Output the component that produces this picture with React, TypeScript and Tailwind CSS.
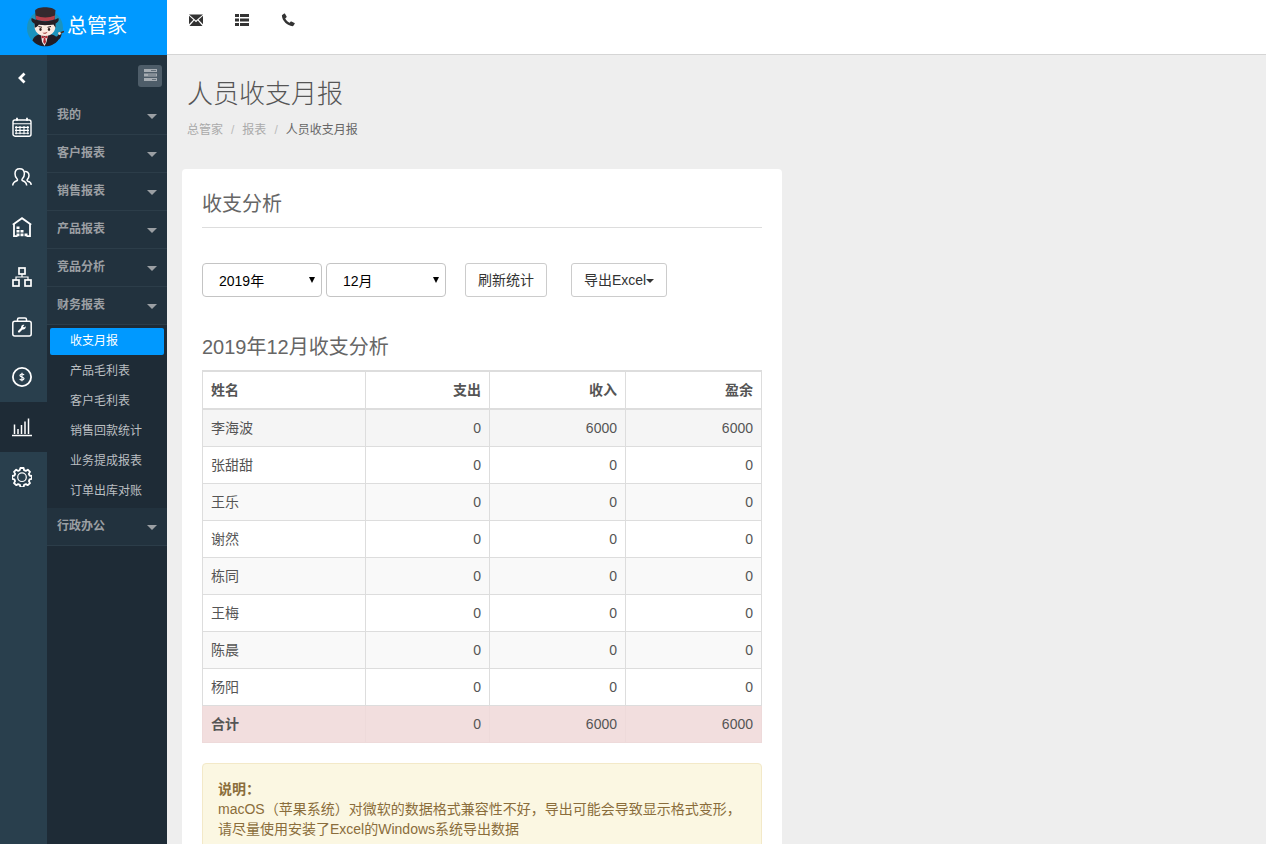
import { useState } from "react";
import type { ReactNode } from "react";

const railIcons: { label: string; icon: ReactNode }[] = [
    {
        label: "日历",
        icon: (
            <g strokeWidth="1.4">
                <rect x="1" y="3" width="18" height="16.2" rx="2" />
                <path d="M1 6.7h18M4.2 9v8.2M8 9v8.2M12 9v8.2M15.8 9v8.2M3 10.4h14M3 13.4h14M3 16.3h14" strokeWidth="1.1" />
                <path d="M5 .8v3M15 .8v3" strokeWidth="1.8" />
            </g>
        ),
    },
    {
        label: "客户",
        icon: (
            <g strokeWidth="1.5">
                <path d="M.7 18.500c.3-3 2-4 4.100-4.700.9-.3.8-1.400.2-2C3.600 10.400 3 8.800 3 6.700c0-3 1.900-5 4.700-5s4.700 2 4.700 5c0 2.100-.7 3.700-2 5.100-.6.700-.7 1.700.3 2 2.200.7 3.700 1.700 4 4.700" />
                <path d="M12.500 4.700c2.600-.5 4.500 1.100 4.500 3.900 0 1.600-.6 2.800-1.600 3.800-.6.600-.5 1.500.4 1.800 1.900.5 3.200 1.300 3.500 3.600" />
            </g>
        ),
    },
    {
        label: "仓库",
        icon: (
            <g>
                <path d="M.8 7.800 10 1.200l9.200 6.600M2 7.500v11.700h3.500M18 7.500v11.700h-3.500" strokeWidth="1.800" />
                <path d="M4.500 9.500h3v2.600h-3zM4.500 13h3v2.600h-3zM8.500 13h3v2.600h-3zM4.500 16.500h3v2.800h-3zM8.500 16.500h3v2.800h-3zM12.500 16.500h3v2.800h-3z" fill="currentColor" stroke="none" />
            </g>
        ),
    },
    {
        label: "组织",
        icon: (
            <g strokeWidth="1.7">
                <rect x="7" y="1" width="6" height="6" />
                <rect x="1" y="13" width="6" height="6" />
                <rect x="13" y="13" width="6" height="6" />
                <path d="M10 7v3M4 13v-3h12v3" strokeWidth="1.200" />
            </g>
        ),
    },
    {
        label: "工具",
        icon: (
            <g strokeWidth="1.5">
                <rect x=".8" y="4.200" width="18.400" height="14.800" rx="2" />
                <path d="M5.500 4V2.500C5.500 1.500 6.100 1 7 1h6c.9 0 1.500.5 1.500 1.500V4" />
                <path d="M7 14.500 10.500 11" strokeWidth="2.200" strokeLinecap="round" />
                <path d="M12.400 7.900 11 9.700l1 .9 1.700-1.400c.3 1.500-.4 2.900-1.900 3.200-2.100.4-3.300-1.300-2.500-3.100.5-1.100 1.600-1.700 3.100-1.400z" fill="currentColor" stroke="none" />
            </g>
        ),
    },
    {
        label: "财务",
        icon: (
            <g>
                <circle cx="10" cy="10" r="9.100" strokeWidth="1.800" />
                <path d="M12 8.100C11.800 7.300 11 7 10 7c-1.200 0-2 .6-2 1.500C8 10.400 12 9.500 12 11.600c0 .9-.8 1.500-2 1.500s-2-.4-2.200-1.300M10 5.800v8.500" strokeWidth="1.200" />
            </g>
        ),
    },
    {
        label: "报表",
        icon: (
            <path d="M0 18.500h20M2.500 17V7.500M6 17v-5M9.500 17V8M13 17V4.500M16.500 17V1.500" strokeWidth="1.500" />
        ),
    },
    {
        label: "设置",
        icon: (
            <g strokeWidth="1.800">
                <path d="M8.400 1h3.200l.5 2.200 1.700.7 2-1.200 2.200 2.200-1.200 2 .7 1.600 2.300.5v2.800l-2.200.6-.7 1.700 1.100 2-2.200 2.100-1.900-1.100-1.800.7-.5 2.300H8.400l-.5-2.300-1.800-.7-1.900 1.100-2.200-2.100 1.100-2-.7-1.700-2.200-.6V9l2.300-.5.700-1.600-1.200-2 2.200-2.200 2 1.200 1.500-.7z" strokeLinejoin="round" />
                <circle cx="10" cy="10.200" r="4.300" strokeWidth="1.200" />
            </g>
        ),
    },
];

const reportItems = ["收支月报", "产品毛利表", "客户毛利表", "销售回款统计", "业务提成报表", "订单出库对账"];

const menuGroups: { title: string; items?: string[] }[] = [
    { title: "我的" },
    { title: "客户报表" },
    { title: "销售报表" },
    { title: "产品报表" },
    { title: "竞品分析" },
    { title: "财务报表", items: reportItems },
    { title: "行政办公" },
];

const rows = [
    { name: "李海波", out: 0, income: 6000, left: 6000 },
    { name: "张甜甜", out: 0, income: 0, left: 0 },
    { name: "王乐", out: 0, income: 0, left: 0 },
    { name: "谢然", out: 0, income: 0, left: 0 },
    { name: "栋同", out: 0, income: 0, left: 0 },
    { name: "王梅", out: 0, income: 0, left: 0 },
    { name: "陈晨", out: 0, income: 0, left: 0 },
    { name: "杨阳", out: 0, income: 0, left: 0 },
];

const Logo = () => (
    <svg viewBox="0 0 38 42" className="h-[42px] w-[38px] shrink-0" aria-hidden="true">
        <circle cx="19" cy="23" r="18" fill="#1c93bd" />
        <path d="M6.500 35.500C8 31 11 30 15 29h9c4 1 7 2 8 6.500-3 3.500-7.500 5.800-12.800 5.800-5.200 0-9.700-2.200-12.700-5.800z" fill="#211d26" />
        <path d="M28 32c3 0 4-1 5-4l2.500 1c-.3 4-3 7-6.500 7z" fill="#211d26" />
        <path d="M15 30l3.500 2 3.500-2-1.500 7-2 4-2.500-4z" fill="#efe6e6" />
        <path d="M15.500 30.500l3 1.200 3-1.200v3l-3-1-3 1zM17.800 33h1.500l.7 4-1.400 2-1.400-2z" fill="#b52a33" />
        <path d="M33 28.500l5-2" stroke="#462b20" strokeWidth="1.500" />
        <circle cx="33.500" cy="28.500" r="1.400" fill="#f6d9c8" />
        <path d="M9 18c6 2 14 2 20 0 .8 3 .6 6-1 8.500-2 3-5.500 4.500-9 4.500s-7-1.500-9-4.500C8.400 24 8.200 21 9 18z" fill="#fbeae0" />
        <path d="M8.500 17h21l.2 6-2.200-3.500c-6 .8-11 .5-14.500-.3-1 1.800-2.300 3-4.300 3.600z" fill="#1b1a20" />
        <path d="M9 5.500C11 1 27 1 29.500 5.500L28.500 15H10z" fill="#35292e" />
        <path d="M9.600 10.500c6 2.600 13.500 2.600 19.400 0l-.5 4c-6 2-12.500 2-18.500 0z" fill="#b8404a" />
        <path d="M5.800 13c8 4.200 18.500 4.200 26.500 0 1.300 2.500-.5 5-4.300 6-6 1.500-12 1.500-18 0-3.800-1-5.500-3.500-4.200-6z" fill="#251f25" />
        <path d="M12.500 21.500l3.500.8M21.500 22.300l3.500-.8" stroke="#352322" strokeWidth="1" />
        <ellipse cx="14.500" cy="24.500" rx="1.200" ry="1.400" fill="#33211e" />
        <ellipse cx="23" cy="24.500" rx="1.200" ry="1.400" fill="#33211e" />
        <path d="M16.500 27.500c1.600.5 3.400.3 5-.8-.6 2.200-3.800 3-5 .8z" fill="#a33b3a" />
    </svg>
);

const Caret = ({ className }: { className?: string }) => (
    <svg viewBox="0 0 10 5" className={className} fill="currentColor" aria-hidden="true">
        <path d="M0 0h10L5 5z" />
    </svg>
);

const PeriodSelect = ({ label, options }: { label: string; options: string[] }) => (
    <div className="relative">
        <select
            aria-label={label}
            className="block h-[34px] w-[120px] appearance-none rounded-[4px] border border-[#c4c4c4] bg-white pt-[2px] pl-4 text-sm text-black"
        >
            {options.map((o) => (
                <option key={o}>{o}</option>
            ))}
        </select>
        <svg viewBox="0 0 6 6" className="pointer-events-none absolute top-[14px] right-[7px] size-[6px]" aria-hidden="true">
            <path d="M0 0h6L3 6z" />
        </svg>
    </div>
);

const TopBar = () => (
    <header className="flex h-[55px] shrink-0">
        <a href="#" className="flex w-[167px] items-center bg-[#0099ff] pb-1 pl-[26px] text-white">
            <Logo />
            <span className="ml-[3px] text-[20px] leading-6">总管家</span>
        </a>
        <nav className="flex grow items-start gap-8 border-b border-[#d5d5d5] bg-white pt-[13px] pl-[22px] text-[#333]">
            <button type="button" aria-label="消息">
                <svg viewBox="0 0 14 14" className="size-[14px]" fill="currentColor">
                    <path d="M0 1.500h14L7 7.600zM0 2.800l4.400 4L0 11.200zM14 2.800l-4.400 4 4.400 4.400zM5.200 7.600 7 9.200l1.800-1.600 4.700 5.400H.5z" />
                </svg>
            </button>
            <button type="button" aria-label="列表">
                <svg viewBox="0 0 14 14" className="size-[14px]" fill="currentColor">
                    <path d="M0 1h4v3H0zM5 1h9v3H5zM0 5.500h4v3H0zM5 5.500h9v3H5zM0 10h4v3H0zM5 10h9v3H5z" />
                </svg>
            </button>
            <button type="button" aria-label="电话">
                <svg viewBox="0 0 14 14" className="size-[14px]" fill="currentColor">
                    <path d="M1.200 1.900 3.200.6c.3-.2.6-.1.800.2l1.600 2.700c.2.300.1.600-.1.800L4.200 5.400c.9 1.900 2.500 3.500 4.500 4.400l1-1.200c.2-.2.500-.3.800-.1l3 1.500c.3.200.4.500.2.800l-1.300 2c-.2.300-.5.400-.8.400C6.200 12.800 1.200 8 .9 2.600c0-.3.100-.5.300-.7z" />
                </svg>
            </button>
        </nav>
    </header>
);

const SideMenu = () => {
    const [active, setActive] = useState("收支月报");

    return (
        <aside className="flex w-[167px] shrink-0">
            <nav className="w-[47px] bg-[#293f4d] text-white">
                <button type="button" aria-label="收起" className="flex h-[47px] w-full items-center justify-center pr-1 pb-[2px]">
                    <svg viewBox="0 0 10 12" className="h-3 w-[10px]" fill="none" stroke="currentColor" strokeWidth="2.800">
                        <path d="M7.500 1.500 3 6l4.500 4.500" />
                    </svg>
                </button>
                {railIcons.map((r) => (
                    <a
                        key={r.label}
                        href="#"
                        aria-label={r.label}
                        className={
                            "flex h-[50px] items-center justify-center pr-[3px] " +
                            (r.label === "报表" ? "bg-[#1e2b36]" : "")
                        }
                    >
                        <svg viewBox="0 0 20 20" className="size-5" fill="none" stroke="currentColor">
                            {r.icon}
                        </svg>
                    </a>
                ))}
            </nav>

            <nav className="w-[120px] bg-[#1e2b36] text-xs">
                <div className="flex h-[42px] justify-end bg-[#22323e] pt-[10px] pr-[5px]">
                    <button type="button" aria-label="切换菜单" className="flex h-[22px] w-6 justify-center rounded-[3px] bg-[#4e5d69] pt-1 text-[#a7adb3]">
                        <svg viewBox="0 0 13 12" className="h-3 w-[13px]" fill="currentColor">
                            <path d="M0 0h13v3H0zM0 4.500h13v3H0zM0 9h13v3H0z" />
                            <path d="M7 1.500h5M4 6h8M8 10.500h4" stroke="#65717b" strokeWidth="1" />
                        </svg>
                    </button>
                </div>
                {menuGroups.map((g) => (
                    <div key={g.title}>
                        <button
                            type="button"
                            className="flex h-[38px] w-full items-center justify-between border-b border-[#2c3d49] bg-[#22323e] pr-[10px] pb-[1px] pl-[10px] font-bold text-[#9b9fa3]"
                        >
                            {g.title}
                            <Caret className="mt-[2px] h-[5px] w-[10px]" />
                        </button>
                        {g.items && (
                            <ul className="flex flex-col gap-[3px] p-[3px]">
                                {g.items.map((item) => (
                                    <li key={item}>
                                        <a
                                            href="#"
                                            onClick={() => setActive(item)}
                                            className={
                                                "block h-[27px] rounded-[2px] pl-5 leading-[27px] " +
                                                (item === active ? "bg-[#0099ff] text-white" : "text-[#bbbfc2]")
                                            }
                                        >
                                            {item}
                                        </a>
                                    </li>
                                ))}
                            </ul>
                        )}
                    </div>
                ))}
            </nav>
        </aside>
    );
};

const ReportTable = () => (
    <table className="w-full table-fixed border-collapse border border-[#ddd] text-sm leading-5 [&_td]:border [&_td]:border-[#ddd] [&_td]:p-2 [&_th]:border [&_th]:border-[#ddd] [&_th]:p-2">
        <colgroup>
            <col className="w-[163px]" />
            <col className="w-[124px]" />
            <col className="w-[136px]" />
            <col className="w-[136px]" />
        </colgroup>
        <thead className="border-y-2 border-[#ddd]">
            <tr>
                <th className="text-left">姓名</th>
                <th className="text-right">支出</th>
                <th className="text-right">收入</th>
                <th className="text-right">盈余</th>
            </tr>
        </thead>
        <tbody>
            {rows.map((row, idx) => (
                <tr key={row.name} className={idx === 0 ? "bg-[#f5f5f5]" : idx % 2 === 0 ? "bg-[#f9f9f9]" : "bg-white"}>
                    <td>{row.name}</td>
                    <td className="text-right">{row.out}</td>
                    <td className="text-right">{row.income}</td>
                    <td className="text-right">{row.left}</td>
                </tr>
            ))}
        </tbody>
        <tfoot>
            <tr className="bg-[#f2dede] [&>*]:border-[#eedada]!">
                <th className="text-left">合计</th>
                <td className="text-right">0</td>
                <td className="text-right">6000</td>
                <td className="text-right">6000</td>
            </tr>
        </tfoot>
    </table>
);

export default function App() {
    return (
        <div className="flex h-screen flex-col overflow-hidden bg-[#eee] font-['Liberation_Sans','Noto_Sans_CJK_SC',sans-serif] text-[#555]">
            <TopBar />
            <div className="flex min-h-0 grow">
                <SideMenu />
                <main className="grow overflow-y-auto px-[15px] [scrollbar-width:none]">
                    <div className="px-[5px] pt-[21px] pb-[29px]">
                        <h1 className="text-[26px] leading-9 font-light text-[#555]">人员收支月报</h1>
                        <nav aria-label="路径" className="mt-2 flex gap-2 text-xs leading-5 text-[#aaa]">
                            <a href="#">总管家</a>
                            <span className="text-[#bbb]">/</span>
                            <a href="#">报表</a>
                            <span className="text-[#bbb]">/</span>
                            <span className="text-[#666]">人员收支月报</span>
                        </nav>
                    </div>

                    <section className="max-w-[600px] rounded-[4px] bg-white p-5">
                        <h2 className="border-b border-[#ddd] pt-[2px] pb-[10px] text-[20px] leading-[26px] text-[#666]">收支分析</h2>

                        <div className="mt-[35px] flex">
                            <PeriodSelect label="年份" options={["2019年", "2018年"]} />
                            <div className="ml-1">
                                <PeriodSelect label="月份" options={["12月", "11月"]} />
                            </div>
                            <button type="button" className="ml-[19px] h-[34px] rounded-[3px] border border-[#ccc] bg-white px-3 text-sm text-[#333]">
                                刷新统计
                            </button>
                            <button type="button" className="ml-6 flex h-[34px] items-center rounded-[3px] border border-[#ccc] bg-white px-3 text-sm text-[#333]">
                                导出Excel
                                <Caret className="mt-[2px] h-1 w-2" />
                            </button>
                        </div>

                        <h3 className="mt-[37px] mb-[10px] text-[20px] leading-[26px] text-[#666]">2019年12月收支分析</h3>

                        <ReportTable />

                        <div className="mt-5 rounded-[4px] border border-[#f3e9c8] bg-[#fbf7e2] p-[15px] text-sm leading-5 text-[#8a6d3b]">
                            <strong>说明：</strong>
                            <p>macOS（苹果系统）对微软的数据格式兼容性不好，导出可能会导致显示格式变形，请尽量使用安装了Excel的Windows系统导出数据</p>
                        </div>
                    </section>
                </main>
            </div>
        </div>
    );
}
